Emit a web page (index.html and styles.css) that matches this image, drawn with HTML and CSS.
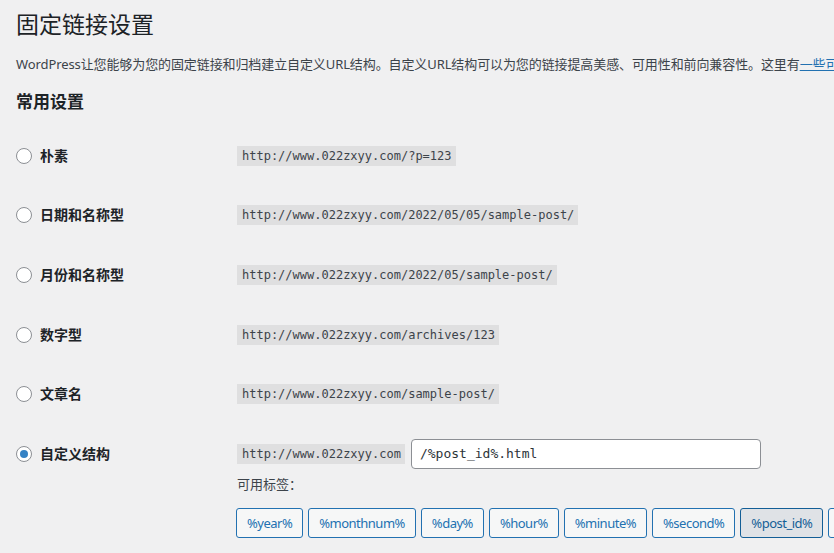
FILE: index.html
```html
<!DOCTYPE html>
<html lang="zh-CN">
<head>
  <meta charset="UTF-8">
  <title>固定链接设置</title>
  <link rel="stylesheet" href="styles.css">
</head>
<body>
  <div class="wrap">
    <h1>固定链接设置</h1>
    <p class="intro">WordPress让您能够为您的固定链接和归档建立自定义URL结构。自定义URL结构可以为您的链接提高美感、可用性和前向兼容性。这里有<a href="#">一些可用的标签</a>，以下是一些例子。</p>

    <h2>常用设置</h2>

    <div class="permalink-structure">
      <div class="row">
        <label class="choice"><span class="radio"></span>朴素</label>
        <div class="value"><code>http://www.022zxyy.com/?p=123</code></div>
      </div>
      <div class="row">
        <label class="choice"><span class="radio"></span>日期和名称型</label>
        <div class="value"><code>http://www.022zxyy.com/2022/05/05/sample-post/</code></div>
      </div>
      <div class="row">
        <label class="choice"><span class="radio"></span>月份和名称型</label>
        <div class="value"><code>http://www.022zxyy.com/2022/05/sample-post/</code></div>
      </div>
      <div class="row">
        <label class="choice"><span class="radio"></span>数字型</label>
        <div class="value"><code>http://www.022zxyy.com/archives/123</code></div>
      </div>
      <div class="row">
        <label class="choice"><span class="radio"></span>文章名</label>
        <div class="value"><code>http://www.022zxyy.com/sample-post/</code></div>
      </div>
      <div class="row custom">
        <label class="choice"><span class="radio checked"></span>自定义结构</label>
        <div class="value">
          <div class="custom-line">
            <code>http://www.022zxyy.com</code>
            <input type="text" class="structure" value="/%post_id%.html">
          </div>
          <div class="tags-label">可用标签：</div>
          <ul class="tags">
            <li><button type="button">%year%</button></li>
            <li><button type="button">%monthnum%</button></li>
            <li><button type="button">%day%</button></li>
            <li><button type="button">%hour%</button></li>
            <li><button type="button">%minute%</button></li>
            <li><button type="button">%second%</button></li>
            <li><button type="button" class="active">%post_id%</button></li>
            <li><button type="button">%postname%</button></li>
            <li><button type="button">%category%</button></li>
          </ul>
        </div>
      </div>
    </div>
  </div>
</body>
</html>
```

FILE: styles.css
```css
html, body {
  margin: 0;
  overflow: hidden;
}
body {
  background: #f0f0f1;
  color: #3c434a;
  font-family: "Noto Sans", "Noto Sans CJK SC", sans-serif;
  font-size: 13px;
}
.wrap {
  padding: 0 16px;
}
h1 {
  margin: 0;
  padding: 9px 0 4px;
  font-size: 23px;
  font-weight: 400;
  line-height: 30px;
  color: #1d2327;
}
.intro {
  margin: 11px 0 0;
  line-height: 20px;
  white-space: nowrap;
  letter-spacing: -0.1px;
}
.intro a {
  color: #2271b1;
  text-decoration: underline;
}
h2 {
  margin: 17px 0 0;
  font-size: 17px;
  line-height: 22px;
  font-weight: 700;
  color: #1d2327;
}
.permalink-structure {
  margin-top: 13px;
}
.row {
  display: flex;
  align-items: center;
  height: 59.6px;
}
.row.custom {
  align-items: flex-start;
  height: auto;
  padding-top: 15px;
}
.choice {
  width: 221px;
  flex: none;
  display: flex;
  align-items: center;
  font-weight: 700;
  font-size: 14px;
  color: #1d2327;
  line-height: 30px;
}
.radio {
  box-sizing: border-box;
  width: 16px;
  height: 16px;
  border: 1px solid #8c8f94;
  border-radius: 50%;
  background: #fff;
  margin-right: 8px;
  display: flex;
  align-items: center;
  justify-content: center;
}
.radio.checked::before {
  content: "";
  width: 8px;
  height: 8px;
  border-radius: 50%;
  background: #3582c4;
}
.value {
  min-width: 0;
}
code {
  display: inline-block;
  background: rgba(0, 0, 0, 0.07);
  padding: 0 4px 0 5px;
  font-family: "DejaVu Sans Mono", monospace;
  font-size: 12px;
  line-height: 20px;
  color: #3c434a;
}
.custom-line {
  display: flex;
  align-items: center;
  gap: 6px;
  height: 30px;
}
.structure {
  box-sizing: border-box;
  width: 350px;
  height: 30px;
  margin: 0;
  padding: 0 8px;
  border: 1px solid #8c8f94;
  border-radius: 4px;
  background: #fff;
  font-family: "DejaVu Sans Mono", monospace;
  font-size: 13px;
  color: #2c3338;
}
.tags-label {
  margin-top: 5px;
  line-height: 20px;
}
.tags {
  list-style: none;
  margin: 14px 0 0 -1px;
  padding: 0;
  display: flex;
  gap: 5px;
  white-space: nowrap;
}
.tags button {
  box-sizing: border-box;
  height: 30px;
  padding: 0 10px;
  border: 1px solid #2271b1;
  border-radius: 3px;
  background: #f6f7f7;
  color: #2271b1;
  font-family: "Noto Sans", "Noto Sans CJK SC", sans-serif;
  font-size: 13px;
  letter-spacing: -0.5px;
}
.tags button.active {
  background: #dfe2e6;
  border-color: #135e96;
  color: #135e96;
}
```
